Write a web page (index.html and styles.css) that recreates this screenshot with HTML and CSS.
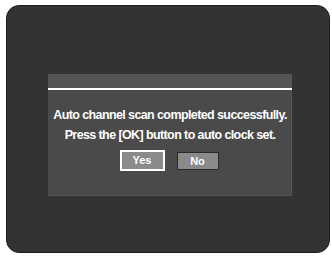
FILE: index.html
```html
<!DOCTYPE html>
<html>
<head>
<meta charset="utf-8">
<link rel="stylesheet" href="styles.css">
</head>
<body>
<div class="screen">
  <div class="dialog">
    <div class="dialog-head"></div>
    <div class="dialog-rule"></div>
    <div class="dialog-body">
      <p class="msg">Auto channel scan completed successfully.</p>
      <p class="msg">Press the [OK] button to auto clock set.</p>
      <div class="buttons">
        <div class="btn btn-active">Yes</div>
        <div class="btn">No</div>
      </div>
    </div>
  </div>
</div>
</body>
</html>
```
FILE: styles.css
```css
html, body {
  margin: 0;
  padding: 0;
  background: #ffffff;
}
body {
  width: 332px;
  height: 257px;
  padding: 5px 0 0 6px;
  box-sizing: border-box;
}
.screen {
  width: 324px;
  height: 248px;
  box-sizing: border-box;
  background: #333333;
  border: 1px solid #1e1e1e;
  border-radius: 13px;
  padding: 68px 0 0 41px;
}
.dialog {
  width: 244px;
  height: 122px;
  background: #4a4a4a;
  box-shadow: inset -1px -1px 0 #565656;
  display: flex;
  flex-direction: column;
}
.dialog-head {
  height: 14px;
  background: #545454;
}
.dialog-rule {
  height: 2px;
  background: #ffffff;
}
.dialog-body {
  padding-top: 15px;
  display: flex;
  flex-direction: column;
  align-items: center;
  font-family: "Liberation Sans", Arial, sans-serif;
  font-weight: bold;
  color: #ffffff;
}
.msg {
  margin: 0;
  font-size: 12.5px;
  line-height: 20px;
  letter-spacing: -0.6px;
  white-space: nowrap;
}
.buttons {
  display: flex;
  align-items: center;
  gap: 12px;
  margin-top: 5px;
  margin-left: -2px;
}
.btn {
  width: 40px;
  height: 16px;
  background: #8a8a8a;
  border: 1px solid #2a2a2a;
  font-size: 11px;
  line-height: 16px;
  text-align: center;
  color: #ffffff;
}
.btn-active {
  width: 41px;
  height: 17px;
  border: 2px solid #ffffff;
  line-height: 17px;
}
```
